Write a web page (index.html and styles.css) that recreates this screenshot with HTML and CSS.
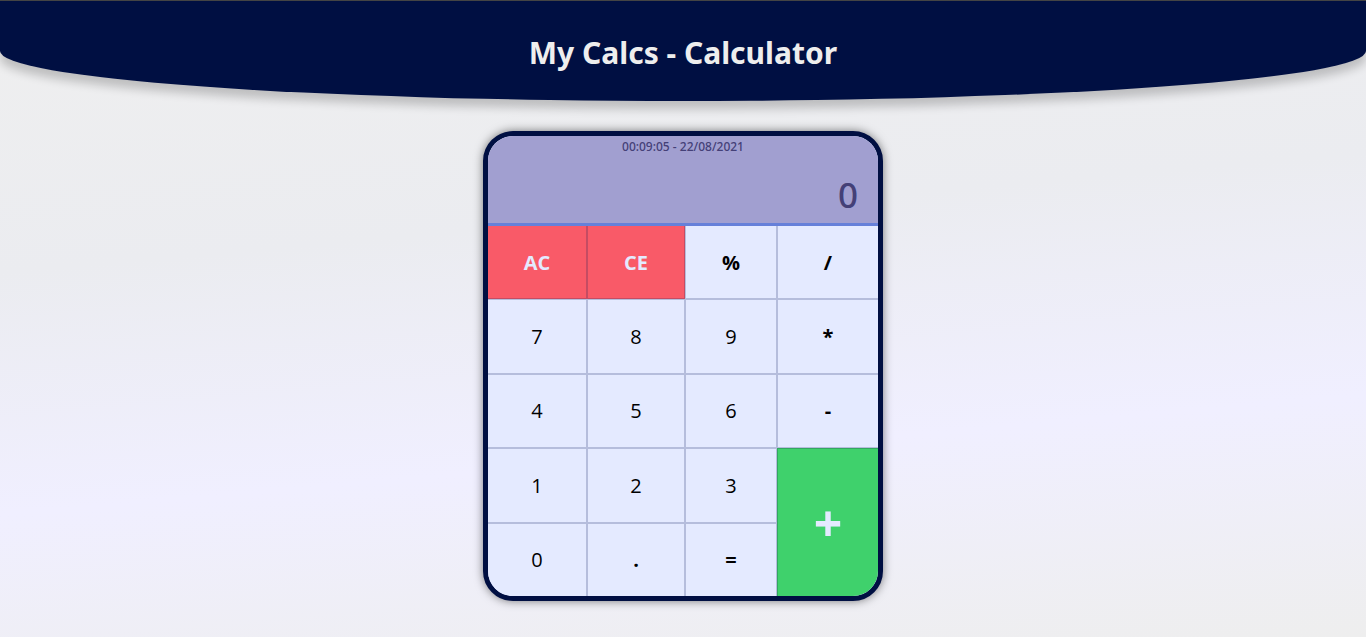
FILE: index.html
```html
<!DOCTYPE html>
<html lang="en">
<head>
<meta charset="utf-8">
<title>My Calcs - Calculator</title>
<link rel="stylesheet" href="styles.css">
</head>
<body>
<header class="header">
  <h1 class="title">My Calcs - Calculator</h1>
</header>
<main class="calculator">
  <div class="display">
    <time class="clock">00:09:05 - 22/08/2021</time>
    <output class="result">0</output>
  </div>
  <div class="keys">
    <button type="button" class="key clear">AC</button>
    <button type="button" class="key clear">CE</button>
    <button type="button" class="key operator">%</button>
    <button type="button" class="key operator">/</button>
    <button type="button" class="key">7</button>
    <button type="button" class="key">8</button>
    <button type="button" class="key">9</button>
    <button type="button" class="key operator">*</button>
    <button type="button" class="key">4</button>
    <button type="button" class="key">5</button>
    <button type="button" class="key">6</button>
    <button type="button" class="key operator">-</button>
    <button type="button" class="key">1</button>
    <button type="button" class="key">2</button>
    <button type="button" class="key">3</button>
    <button type="button" class="key plus">+</button>
    <button type="button" class="key">0</button>
    <button type="button" class="key operator">.</button>
    <button type="button" class="key operator">=</button>
  </div>
</main>
</body>
</html>
```

FILE: styles.css
```css
* {
  box-sizing: border-box;
}

body {
  margin: 0;
  min-height: 100vh;
  font-family: "Open Sans", "Noto Sans", sans-serif;
  background: linear-gradient(175deg, #efefef, #ebecf0 36%, #f0efff 68%, #eeeeee);
}

.header {
  display: flex;
  align-items: center;
  justify-content: center;
  padding: 30px 16px 26px;
  border-top: 1px solid #444444;
  border-radius: 0 0 50% 50% / 0 0 50px 50px;
  background: #000f42;
  box-shadow: 0 8px 10px rgba(0, 0, 0, 0.2);
}

.title {
  margin: 0;
  font-family: "Noto Sans", sans-serif;
  font-size: 30px;
  line-height: 44px;
  font-weight: 700;
  color: #eeeeee;
}

.calculator {
  width: 400px;
  max-width: 100%;
  margin: 30px auto 36px;
  overflow: hidden;
  border: 5px solid #000f42;
  border-radius: 30px;
  background: #e4eaff;
  box-shadow: 0 0 10px rgba(0, 0, 0, 0.5);
}

.display {
  position: relative;
  z-index: 1;
  display: flex;
  flex-direction: column;
  padding: 2px 20px 3px;
  border-bottom: 3px solid #6680d9;
  background: #a19fd0;
  color: #444077;
  font-family: "Noto Sans", sans-serif;
  font-weight: 500;
}

.clock {
  font-size: 12px;
  line-height: 18px;
  text-align: center;
}

.result {
  padding-top: 14px;
  font-size: 35px;
  line-height: 50px;
  text-align: right;
}

.keys {
  display: grid;
  grid-template-columns: 100fr 98fr 92fr 102fr;
  grid-template-rows: repeat(5, 1fr);
  height: 372px;
  margin: -1px;
}

.key {
  margin: 0;
  padding: 0;
  border: 1px solid #b5bddc;
  background: #e4eaff;
  color: #000000;
  font-family: inherit;
  font-size: 20px;
  font-weight: 400;
  cursor: pointer;
}

.operator {
  font-weight: 700;
}

.clear {
  border-color: #c54c63;
  background: #f95a68;
  color: #e4eaff;
  font-weight: 700;
}

.plus {
  grid-area: 4 / 4 / 6 / 5;
  border-color: #33a660;
  background: #3fd16c;
  color: #e4eaff;
  font-size: 50px;
  font-weight: 700;
}
```
